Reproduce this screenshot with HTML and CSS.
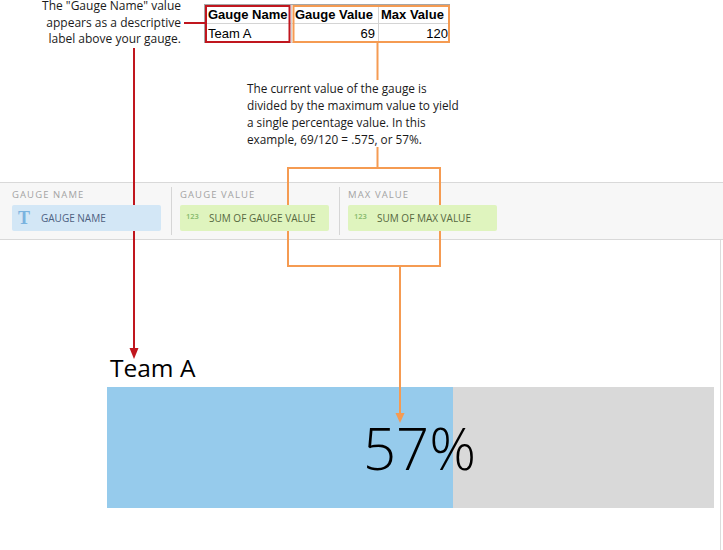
FILE: index.html
```html
<!DOCTYPE html>
<html lang="en">
<head>
<meta charset="utf-8">
<title>Gauge</title>
<link rel="stylesheet" href="styles.css">
</head>
<body>
<div class="page">
  <section class="top">
    <div class="top-row">
      <p class="left-note">The "Gauge Name" value<br>appears as a descriptive<br>label above your gauge.</p>
      <table class="sheet">
        <tr><th class="c1">Gauge Name</th><th class="c2">Gauge Value</th><th class="c3">Max Value</th></tr>
        <tr><td>Team A</td><td class="num">69</td><td class="num">120</td></tr>
      </table>
    </div>
    <p class="mid-note">The current value of the gauge is<br>divided by the maximum value to yield<br>a single percentage value. In this<br>example, 69/120 = .575, or 57%.</p>
  </section>

  <div class="main">
    <div class="panel">
      <div class="field first">
        <div class="field-label">GAUGE NAME</div>
        <div class="pill pill-text"><span class="pill-icon t-icon">T</span><span>GAUGE NAME</span></div>
      </div>
      <div class="field">
        <div class="field-label">GAUGE VALUE</div>
        <div class="pill pill-num"><span class="pill-icon n-icon">123</span><span>SUM OF GAUGE VALUE</span></div>
      </div>
      <div class="field">
        <div class="field-label">MAX VALUE</div>
        <div class="pill pill-num"><span class="pill-icon n-icon">123</span><span>SUM OF MAX VALUE</span></div>
      </div>
    </div>

    <div class="canvas">
      <div class="gauge-title">Team A</div>
      <div class="bar">
        <div class="bar-fill" style="width:57%"></div>
        <div class="bar-value">57%</div>
      </div>
    </div>
  </div>
</div>

<svg class="marks" width="723" height="550" viewBox="0 0 723 550" aria-hidden="true">
  <g stroke="#c0161e" stroke-width="2" fill="none">
    <line x1="184" y1="23" x2="206" y2="23"/>
    <line x1="134" y1="48" x2="134" y2="350"/>
    <rect x="206" y="6" width="83.5" height="36"/>
  </g>
  <polygon points="129.5,348 138.5,348 134,359" fill="#c0161e"/>
  <g stroke="#f59b52" stroke-width="2" fill="none">
    <rect x="293.5" y="6" width="155.5" height="36"/>
    <line x1="377.5" y1="43" x2="377.5" y2="80"/>
    <line x1="377.5" y1="147" x2="377.5" y2="168"/>
    <rect x="288" y="168" width="152" height="98"/>
    <line x1="400" y1="266" x2="400" y2="414"/>
  </g>
  <polygon points="395.5,413 404.5,413 400,423" fill="#f59b52"/>
</svg>
</body>
</html>
```

FILE: styles.css
```css
* { box-sizing: border-box; }

html, body {
  margin: 0;
  padding: 0;
  background: #ffffff;
}

body {
  width: 723px;
  height: 550px;
  overflow: hidden;
  position: relative;
  font-family: "Open Sans", "Noto Sans", sans-serif;
  color: #111111;
}

.page {
  width: 723px;
}

/* ---------- top annotations ---------- */
.top {
  height: 182px;
}

.top-row {
  display: flex;
  align-items: flex-start;
  height: 80px;
  padding-top: 4px;
}

.left-note {
  width: 181px;
  margin: -6px 0 0 0;
  text-align: right;
  font-size: 12px;
  line-height: 16.5px;
  color: #1a1a1a;
}

.sheet {
  margin-left: 23px;
  border-collapse: separate;
  border-spacing: 0;
  table-layout: fixed;
  border-left: 1px solid #a6a6a6;
  border-top: 1px solid #a6a6a6;
  font-family: "Liberation Sans", Arial, sans-serif;
  font-size: 13px;
  color: #000000;
}

.sheet th,
.sheet td {
  height: 19px;
  padding: 2px 3px 0 3px;
  line-height: 16px;
  border-right: 1px solid #d4d4d4;
  border-bottom: 1px solid #d4d4d4;
  text-align: left;
  white-space: nowrap;
  overflow: hidden;
}

.sheet th { font-weight: bold; }
.sheet .c1 { width: 87px; }
.sheet .c2 { width: 87px; }
.sheet .c3 { width: 71px; padding-left: 2px; }
.sheet td.num { text-align: right; }
.sheet tr > :last-child { padding-right: 1px; }

.mid-note {
  margin: 0 0 0 247px;
  font-size: 11.8px;
  line-height: 17px;
  color: #1a1a1a;
}

/* ---------- field panel ---------- */
.main {
  width: 721px;
}

.panel {
  display: flex;
  height: 58px;
  background: #f7f7f7;
  border-top: 1px solid #d9d9d9;
  border-bottom: 1px solid #d9d9d9;
  width: 723px;
}

.field {
  width: 168px;
  margin: 4px 0;
  padding-left: 8px;
  padding-top: 2px;
  border-left: 1px solid #d6d6d6;
}

.field.first {
  width: 171px;
  padding-left: 12px;
  border-left: none;
}

.field-label {
  font-size: 9.5px;
  line-height: 12px;
  letter-spacing: 1.1px;
  color: #a3a3a3;
  margin-bottom: 4px;
  white-space: nowrap;
}

.pill {
  position: relative;
  z-index: 2;
  display: flex;
  align-items: center;
  width: 149px;
  height: 26px;
  padding-left: 6px;
  border-radius: 2px;
  font-size: 10px;
  white-space: nowrap;
}

.pill-text {
  background: #d3e7f6;
  color: #4d6181;
}

.pill-num {
  background: #dff4be;
  color: #56683f;
}

.pill-icon {
  width: 23px;
  flex: none;
}

.t-icon {
  font-family: "Liberation Serif", "DejaVu Serif", serif;
  font-weight: bold;
  font-size: 18px;
  line-height: 18px;
  color: #7ab3df;
}

.n-icon {
  font-size: 7.5px;
  font-weight: 600;
  color: #86b96a;
  line-height: 8px;
  margin-top: -5px;
}

/* ---------- gauge ---------- */
.canvas {
  height: 310px;
  padding: 114px 0 0 107px;
  border-right: 1px solid #dcdcdc;
}

.gauge-title {
  font-size: 24.5px;
  line-height: 28px;
  margin-bottom: 5px;
  padding-left: 3px;
  color: #000000;
}

.bar {
  position: relative;
  width: 607px;
  height: 121px;
  background: #d9d9d9;
  display: flex;
  align-items: center;
  justify-content: center;
  padding-left: 18px;
}

.bar-fill {
  position: absolute;
  left: 0;
  top: 0;
  bottom: 0;
  background: #96cbec;
}

.bar-value {
  position: relative;
  font-size: 58px;
  font-weight: 300;
  line-height: 70px;
  color: #000000;
}

/* ---------- annotation overlay ---------- */
.marks {
  position: absolute;
  left: 0;
  top: 0;
  z-index: 1;
  pointer-events: none;
}
```
